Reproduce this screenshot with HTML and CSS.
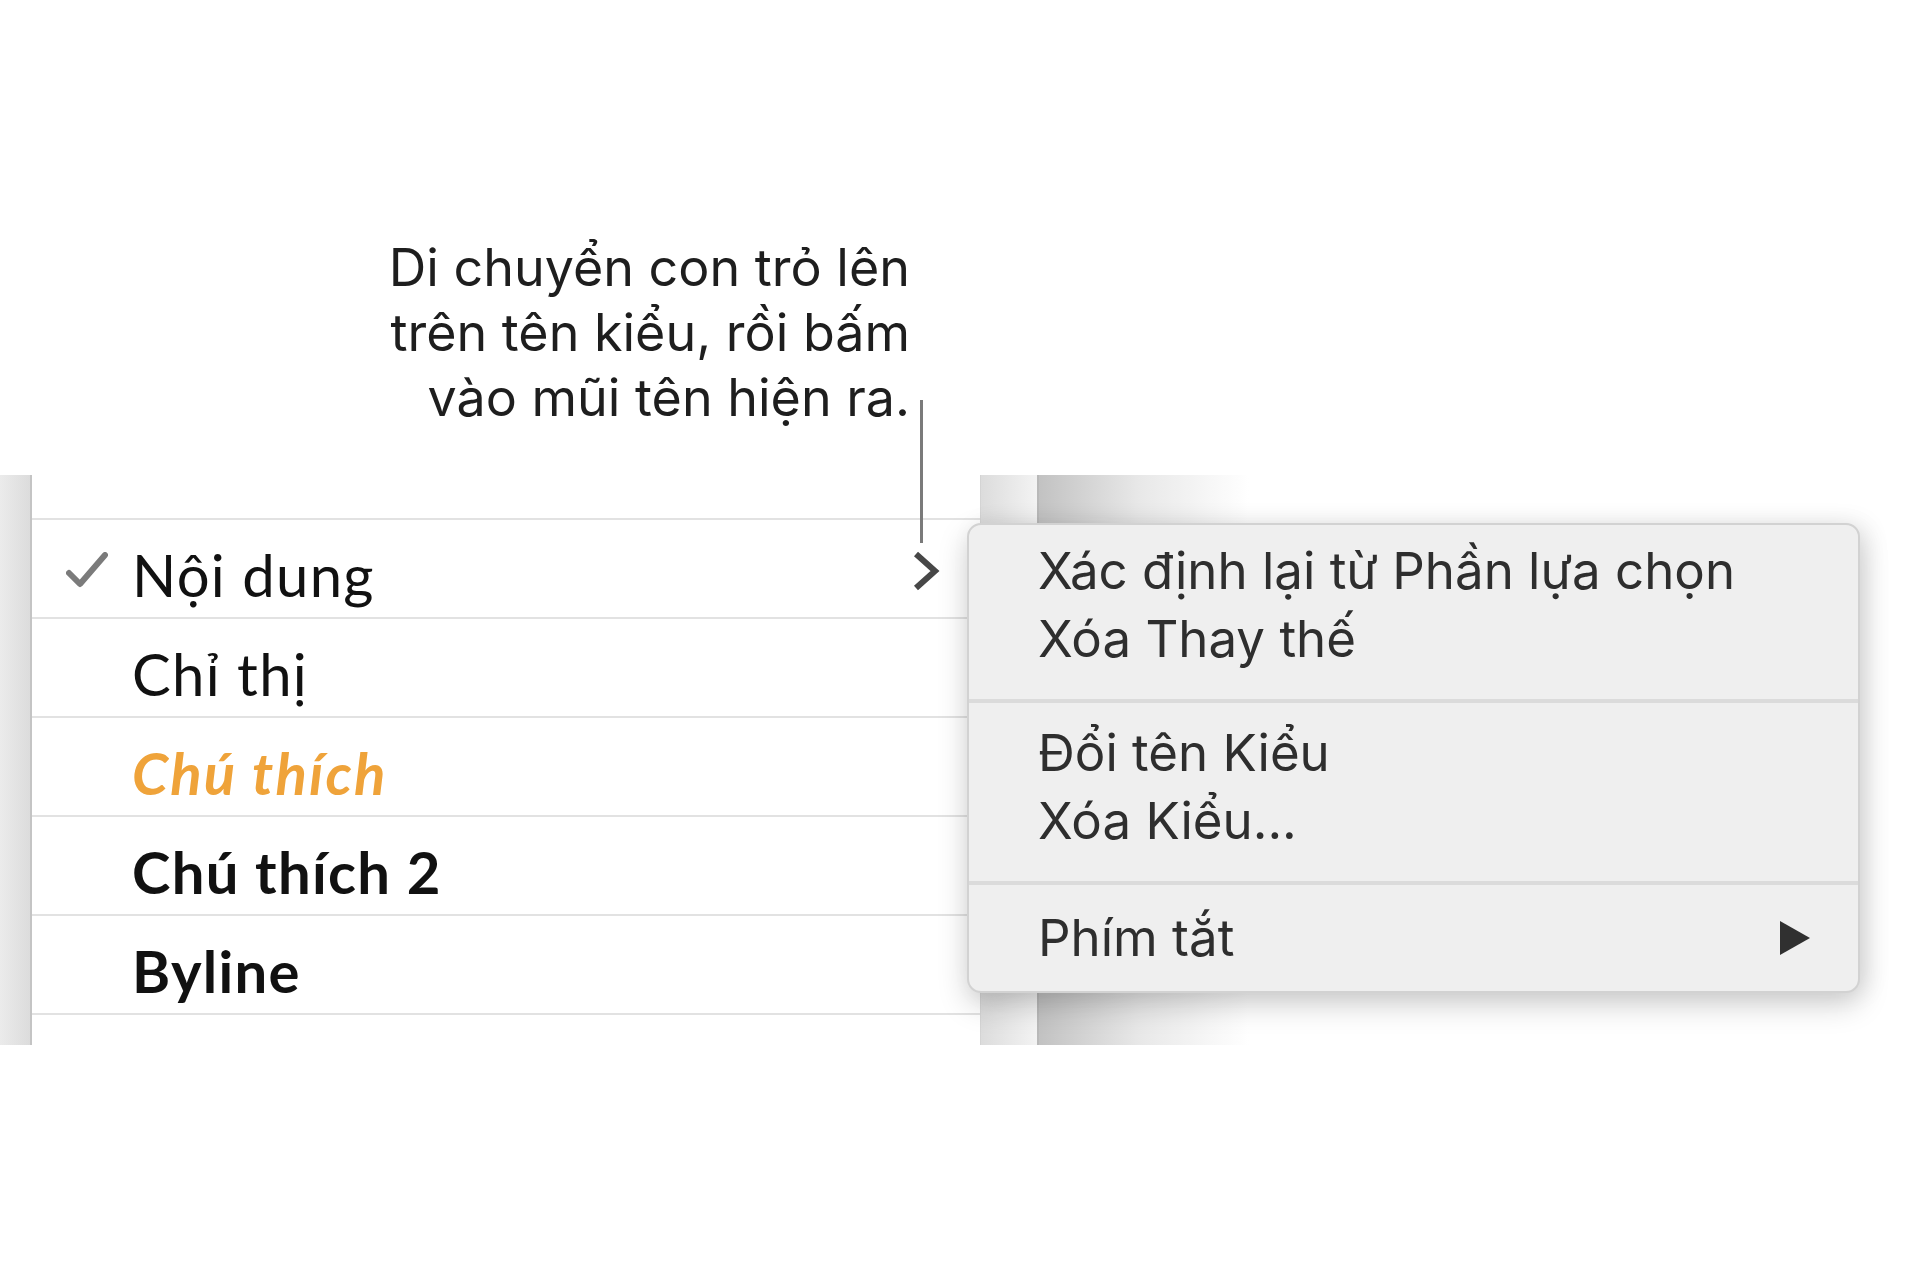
FILE: index.html
```html
<!DOCTYPE html>
<html lang="vi">
<head>
    <meta charset="UTF-8">
    <meta name="viewport" content="width=device-width, initial-scale=1.0">
    <title>Kiểu đoạn</title>
    <link rel="stylesheet" href="styles.css">
</head>
<body>
    <div class="stage">
        <p class="note">Di chuyển con trỏ lên<br>trên tên kiểu, rồi bấm<br>vào mũi tên hiện ra.</p>

        <div class="panel">
            <div class="rail"></div>

            <div class="styles">
                <div class="styles-top"></div>
                <ul class="style-list">
                    <li class="row">
                        <span class="mark">
                            <svg width="42" height="36" viewBox="0 0 42 36"><polyline points="3,21 14,32 39,3" fill="none" stroke="#7b7b7b" stroke-width="6" stroke-linecap="round" stroke-linejoin="round"/></svg>
                        </span>
                        <span class="name">Nội dung</span>
                        <span class="more">
                            <svg width="28" height="40" viewBox="0 0 28 40"><polyline points="4,3 23,20 4,37" fill="none" stroke="#474747" stroke-width="6" stroke-linejoin="miter"/></svg>
                        </span>
                    </li>
                    <li class="row"><span class="mark"></span><span class="name">Chỉ thị</span></li>
                    <li class="row"><span class="mark"></span><span class="name caption">Chú thích</span></li>
                    <li class="row"><span class="mark"></span><span class="name strong">Chú thích 2</span></li>
                    <li class="row"><span class="mark"></span><span class="name strong">Byline</span></li>
                </ul>
            </div>

            <div class="gutter"></div>
            <div class="shade"></div>
        </div>

        <!-- đường chỉ từ chú thích xuống mũi tên -->
        <span class="leader"></span>

        <div class="menu">
            <div class="menu-group first">
                <div class="menu-item">Xác định lại từ Phần lựa chọn</div>
                <div class="menu-item">Xóa Thay thế</div>
            </div>
            <div class="menu-sep"></div>
            <div class="menu-group">
                <div class="menu-item">Đổi tên Kiểu</div>
                <div class="menu-item">Xóa Kiểu...</div>
            </div>
            <div class="menu-sep"></div>
            <div class="menu-group last">
                <div class="menu-item sub">
                    <span>Phím tắt</span>
                    <svg width="34" height="38" viewBox="0 0 34 38"><polygon points="2,2 32,19 2,36" fill="#303030"/></svg>
                </div>
            </div>
        </div>
    </div>
</body>
</html>
```

FILE: styles.css
```css
body {
    margin: 0;
    background: #ffffff;
    font-family: Inter, "Liberation Sans", sans-serif;
    color: #1c1c1c;
}

.stage {
    position: relative;
    width: 1920px;
    height: 1280px;
    overflow: hidden;
}

.note {
    margin: 0;
    padding-top: 235px;
    width: 910px;
    text-align: right;
    font-size: 52px;
    line-height: 65px;
    color: #1e1e1e;
}

.panel {
    display: flex;
    margin-top: 45px;
    height: 570px;
}

.rail {
    width: 30px;
    background: linear-gradient(to right, #ebebeb, #dcdcdc);
    border-right: 2px solid #c4c4c4;
}

.styles {
    width: 948px;
    background: #fff;
}

.styles-top {
    height: 43px;
}

.style-list {
    list-style: none;
    margin: 0;
    padding: 0;
    border-bottom: 2px solid #e2e2e2;
}

.row {
    display: flex;
    align-items: center;
    box-sizing: border-box;
    height: 99px;
    padding-top: 12px;
    border-top: 2px solid #e2e2e2;
    font-family: Lato, "Open Sans", sans-serif;
    font-size: 58px;
    letter-spacing: 1.3px;
    color: #111;
}

.mark {
    display: flex;
    justify-content: flex-end;
    width: 100px;
    padding-right: 24px;
    box-sizing: border-box;
    margin-top: -10px;
}

.name {
    flex: 1;
}

.caption {
    font-weight: 700;
    font-style: italic;
    letter-spacing: 2.2px;
    color: #efa33a;
}

.strong {
    font-weight: 700;
}

.more {
    padding-right: 40px;
    margin-top: -12px;
}

.gutter {
    width: 56px;
    border-left: 1px solid #d4d4d4;
    background: linear-gradient(to right, #dcdcdc, #f3f3f3);
}

.shade {
    flex: 1;
    border-left: 2px solid #b9b9b9;
    background: linear-gradient(to right, #c2c2c2, #e8e8e8 100px, #ffffff 210px);
}

.leader {
    position: absolute;
    left: 920px;
    top: 400px;
    width: 3px;
    height: 143px;
    background: #7a7a7a;
}

.menu {
    position: absolute;
    left: 967px;
    top: 523px;
    width: 893px;
    height: 470px;
    box-sizing: border-box;
    background: #efefef;
    border: 2px solid #d2d2d2;
    border-radius: 14px;
    box-shadow: 0 12px 30px rgba(0, 0, 0, 0.18), 8px 0 24px rgba(0, 0, 0, 0.08);
    color: #2e2e2e;
    font-size: 51px;
}

.menu-group {
    padding: 16px 0 26px;
}

.menu-group.first {
    padding-top: 12px;
}

.menu-group.last {
    padding-top: 19px;
}

.menu-item {
    height: 68px;
    line-height: 68px;
    padding-left: 69px;
}

.menu-item.sub {
    display: flex;
    justify-content: space-between;
    align-items: center;
    padding-right: 46px;
}

.menu-sep {
    height: 4px;
    background: #dbdbdb;
}
```
